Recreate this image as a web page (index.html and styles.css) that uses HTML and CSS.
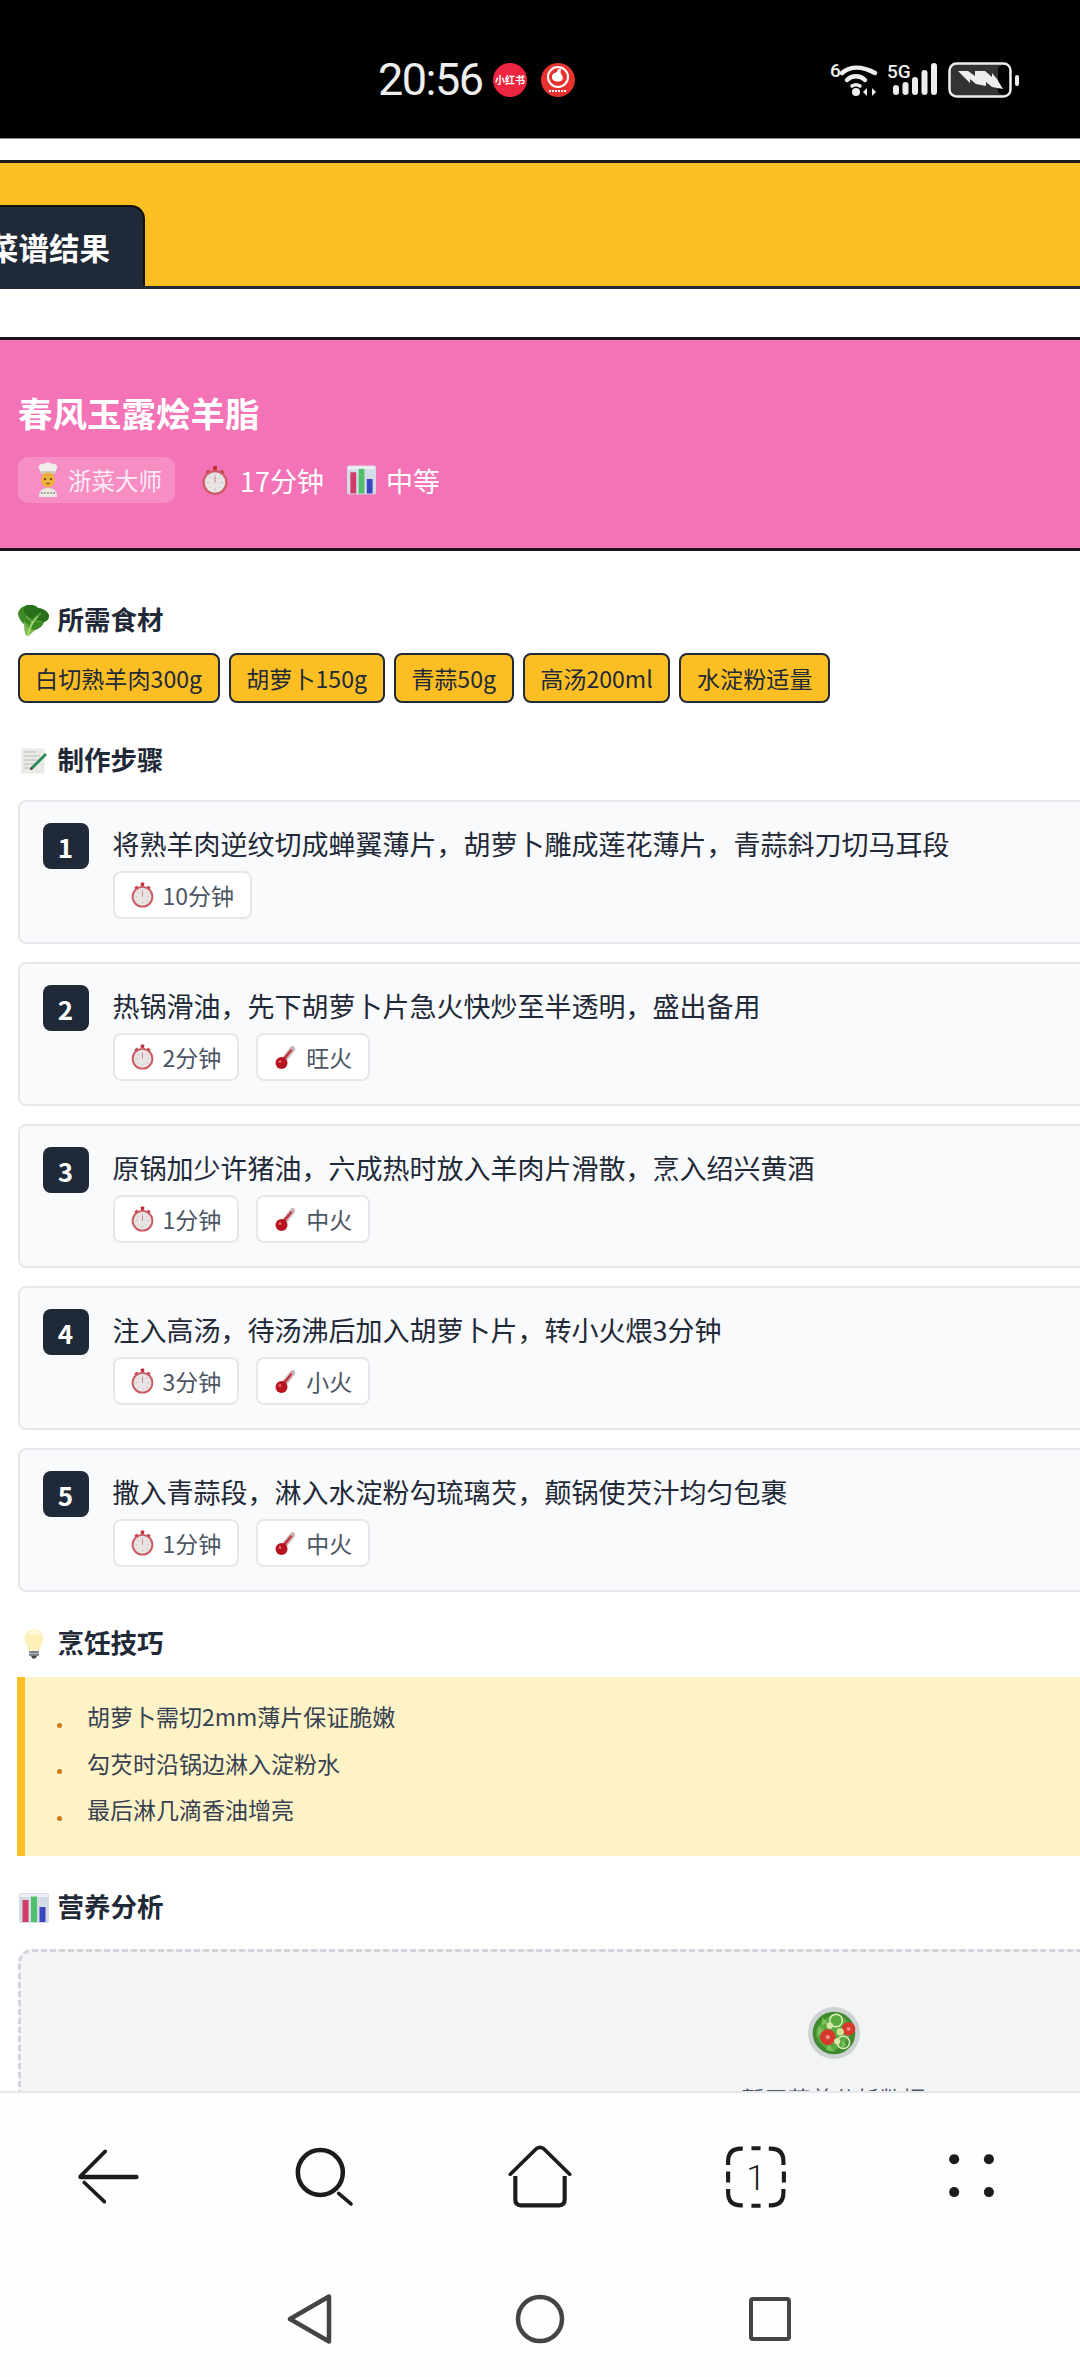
FILE: index.html
```html
<!DOCTYPE html>
<html lang="zh-CN">
<head>
<meta charset="utf-8">
<title>菜谱结果</title>
<link rel="stylesheet" href="styles.css">
</head>
<body>
<svg class="defs" width="0" height="0" aria-hidden="true">
  <defs>
    <symbol id="stopwatch" viewBox="0 0 26 30">
      <rect x="11" y="0.5" width="4" height="4" rx="1" fill="#c0303a"/>
      <path d="M3.500 6.500l3-2.500 1.500 2-3 2.500zM22.500 6.500l-3-2.500-1.500 2 3 2.500z" fill="#c0404a"/>
      <circle cx="13" cy="17" r="12.500" fill="#cb5a63"/>
      <circle cx="13" cy="17" r="10.300" fill="#e7e4e3"/>
      <path d="M13 9v2M13 23v2M5 17h2M19 17h2M7.500 11.500l1.200 1.200M18.500 11.500l-1.200 1.200M7.500 22.500l1.200-1.200M18.500 22.500l-1.200-1.200" stroke="#c3b0b0" stroke-width="1"/>
      <path d="M13 17V11" stroke="#c77a80" stroke-width="1"/>
    </symbol>
    <symbol id="chart" viewBox="0 0 30 30">
      <rect width="30" height="30" rx="2" fill="#d5dbe6"/>
      <rect x="1" y="1" width="28" height="3" fill="#eceff4"/>
      <rect x="3.500" y="7" width="6" height="22" fill="#cf3c68"/>
      <rect x="12" y="3.500" width="6" height="25.500" fill="#4fbf6b"/>
      <rect x="20.500" y="14" width="6" height="15" fill="#3a45c0"/>
    </symbol>
    <symbol id="cook" viewBox="0 0 22 36">
      <path d="M3 8c-3-3 0-7 4-6 2-2 6-2 8 0 4-1 7 3 4 6l-1 4H4z" fill="#f1efe9"/>
      <rect x="4" y="9" width="14" height="3" fill="#cfc9bb"/>
      <ellipse cx="11" cy="18" rx="7" ry="7.500" fill="#eeb03c"/>
      <circle cx="8" cy="17" r="1.100" fill="#5b3a1a"/>
      <circle cx="14" cy="17" r="1.100" fill="#5b3a1a"/>
      <path d="M9 21.500h4" stroke="#b3502f" stroke-width="1.400"/>
      <path d="M2 35c0-6 3-9 9-9s9 3 9 9z" fill="#ece9e2"/>
      <path d="M4 31h14" stroke="#8f8f8f" stroke-width="1.400" stroke-dasharray="2 1"/>
    </symbol>
    <symbol id="leaf" viewBox="0 0 32 32">
      <path d="M7 1c5-2 10-1 13 2 5 0 11 4 11 8 0 3-2 5-5 6-1 4-5 7-9 8-3 2-5 5-8 6-2-2-3-7-2-11C3 17 0 12 0 8c1-3 3-6 7-7z" fill="#3c8a25"/>
      <path d="M7 1c5-2 10-1 13 2 6 1 11 5 11 8 0 3-2 5-5 6-4 1-8-1-11-3C9 12 4 8 7 1z" fill="#28701a"/>
      <path d="M6 16c2 5 6 9 11 9-3 2-5 5-8 6-2-2-3-7-3-15z" fill="#7cbc4c"/>
      <path d="M10 31c1-7 3-14 10-20" stroke="#a9d672" stroke-width="2.200" fill="none"/>
      <path d="M12 22l-6-5M14 17l-6-6M15 15l9 2M17 13l6-5" stroke="#6fae42" stroke-width="1.100" fill="none"/>
    </symbol>
    <symbol id="memo" viewBox="0 0 26 26">
      <rect x="0.500" y="0.500" width="23" height="25" fill="#e9e9e6"/>
      <path d="M3 4h12M3 8h16M3 12h14M3 16h10M3 20h8" stroke="#bcbcb8" stroke-width="1"/>
      <path d="M24 5l2 2L12 21l-3 1 1-3z" fill="#2d8a55"/>
      <path d="M9 22l1-3 2 2z" fill="#33302e"/>
    </symbol>
    <symbol id="thermometer" viewBox="0 0 22 25">
      <path d="M16 1.500c2-1.500 5 1 4 3.500L10 18l-4-4z" fill="#c9b5b5"/>
      <path d="M8 13l8-9 1.400 1.200L10 15z" fill="#c4303a"/>
      <circle cx="6.500" cy="18" r="6" fill="#b8141f"/>
      <circle cx="5" cy="16.500" r="1.500" fill="#e2626a"/>
    </symbol>
    <symbol id="bulb" viewBox="0 0 20 30">
      <path d="M10 0.500c5.500 0 9.500 4 9.500 9 0 5-3.500 7.500-4.500 12.500H5C4 17 0.500 14.500 0.500 9.500c0-5 4-9 9.500-9z" fill="#fdf0b8"/>
      <path d="M10 2c3.500 0 6 2 7 5-3-2-9-3-13 0 1-3 3-5 6-5z" fill="#fffbe6"/>
      <rect x="5" y="22" width="10" height="5" rx="1" fill="#7c8088"/>
      <path d="M5 24.500h10" stroke="#b9bdc2" stroke-width="1"/>
      <path d="M7 27h6l-1.500 2.500h-3z" fill="#3f434a"/>
    </symbol>
    <symbol id="salad" viewBox="0 0 50 50">
      <circle cx="25" cy="25" r="25" fill="#cdd3d2"/>
      <circle cx="25" cy="25" r="20.500" fill="#3f8a2f"/>
      <path d="M8 22c5-8 11-15 20-15 7 2 14 9 14 16-3 9-9 16-18 19C14 40 6 31 8 22z" fill="#5aa93f"/>
      <path d="M10 18l7 6-8 4zM20 36l6 7-9-2zM37 36l-5 5 1-9zM14 10l7 6-8 1z" fill="#78c257"/>
      <circle cx="27" cy="13" r="6" fill="none" stroke="#e3efc1" stroke-width="1.400"/>
      <circle cx="34" cy="34" r="6" fill="none" stroke="#e3efc1" stroke-width="1.400"/>
      <circle cx="19" cy="29" r="7.500" fill="#d8372c"/>
      <circle cx="19" cy="29" r="2" fill="#f0908a"/>
      <circle cx="39" cy="21" r="6.500" fill="#d8372c"/>
      <circle cx="39" cy="21" r="1.800" fill="#f0908a"/>
      <circle cx="21" cy="18" r="3" fill="#dbe7a6"/>
      <circle cx="31" cy="24" r="3.500" fill="#cfe29a"/>
      <circle cx="28" cy="33" r="3" fill="#dbe7a6"/>
    </symbol>
  </defs>
</svg>

<header class="statusbar">
  <div class="status-left">
    <span class="clock">20:56</span>
    <span class="app-badge"><span class="app-badge-text">小红书</span></span>
    <span class="app-badge app-badge-two">
      <svg class="app-glyph" viewBox="0 0 34 34"><circle cx="17" cy="14" r="10" fill="none" stroke="#fff" stroke-width="2"/><path d="M11 14c0-4 3-4 5-5 0-2 2-4 4-3 0 2-1 3 0 5 2 2 3 5 0 7-3 1-9 1-9-4z" fill="#fff"/><path d="M8 28h18" stroke="#fff" stroke-width="2" stroke-dasharray="2 1"/></svg>
    </span>
  </div>
  <div class="status-right">
    <svg class="wifi" viewBox="0 0 48 36">
      <text x="0" y="15" class="wifi-six">6</text>
      <path d="M12 11c8-7 20-7 33 0" fill="none" stroke="#eee" stroke-width="4.500" stroke-linecap="round"/>
      <path d="M17 18c5-5 13-5 18 0" fill="none" stroke="#eee" stroke-width="4.500" stroke-linecap="round"/>
      <path d="M22 24c3-2 5-2 8 0" fill="none" stroke="#eee" stroke-width="3.500" stroke-linecap="round"/>
      <circle cx="26" cy="30" r="4" fill="#eee"/>
      <path d="M37 26l-4 4 4 4zM42 26l4 4-4 4z" fill="#eee"/>
    </svg>
    <svg class="signal" viewBox="0 0 50 36">
      <text x="0" y="16" class="signal-text">5G</text>
      <rect x="6" y="23" width="6" height="10" rx="3" fill="#eee"/>
      <rect x="15.500" y="20" width="6" height="13" rx="3" fill="#eee"/>
      <rect x="25" y="15" width="6" height="18" rx="3" fill="#eee"/>
      <rect x="34.500" y="8" width="6" height="25" rx="3" fill="#eee"/>
      <rect x="44" y="1" width="6" height="32" rx="3" fill="#eee"/>
    </svg>
    <svg class="battery" viewBox="0 0 72 36">
      <rect x="1.500" y="1.500" width="61" height="33" rx="7" fill="#333" stroke="#eee" stroke-width="2.500"/>
      <rect x="50" y="3" width="11" height="30" rx="5" fill="#000"/>
      <path d="M10 9l10 0 7 5 0-5 10 0 7 6 0-4 5 6 6 10-11-2-6-5 0 4-10-2-6-5 0 4z" fill="#eee"/>
      <rect x="67" y="13" width="4" height="11" rx="2" fill="#eee"/>
    </svg>
  </div>
</header>

<main class="page">
  <div class="tabbar">
    <div class="tab">菜谱结果</div>
  </div>

  <section class="hero">
    <h1 class="hero-title">春风玉露烩羊脂</h1>
    <div class="hero-meta">
      <span class="cuisine"><svg class="ico-cook"><use href="#cook"/></svg>浙菜大师</span>
      <span class="meta-item"><svg class="ico-watch-lg"><use href="#stopwatch"/></svg>17分钟</span>
      <span class="meta-item meta-level"><svg class="ico-chart-lg"><use href="#chart"/></svg>中等</span>
    </div>
  </section>

  <div class="content">
    <h2 class="heading heading-ingredients"><span class="heading-ico"><svg class="ico-leaf"><use href="#leaf"/></svg></span>所需食材</h2>
    <ul class="tags">
      <li class="tag">白切熟羊肉300g</li>
      <li class="tag">胡萝卜150g</li>
      <li class="tag">青蒜50g</li>
      <li class="tag">高汤200ml</li>
      <li class="tag">水淀粉适量</li>
    </ul>

    <h2 class="heading heading-steps"><span class="heading-ico"><svg class="ico-memo"><use href="#memo"/></svg></span>制作步骤</h2>
    <ol class="steps">
      <li class="step">
        <span class="step-no">1</span>
        <div class="step-body">
          <p class="step-text">将熟羊肉逆纹切成蝉翼薄片，胡萝卜雕成莲花薄片，青蒜斜刀切马耳段</p>
          <div class="step-chips">
            <span class="chip"><svg class="ico-watch"><use href="#stopwatch"/></svg>10分钟</span>
          </div>
        </div>
      </li>
      <li class="step">
        <span class="step-no">2</span>
        <div class="step-body">
          <p class="step-text">热锅滑油，先下胡萝卜片急火快炒至半透明，盛出备用</p>
          <div class="step-chips">
            <span class="chip"><svg class="ico-watch"><use href="#stopwatch"/></svg>2分钟</span>
            <span class="chip"><svg class="ico-temp"><use href="#thermometer"/></svg>旺火</span>
          </div>
        </div>
      </li>
      <li class="step">
        <span class="step-no">3</span>
        <div class="step-body">
          <p class="step-text">原锅加少许猪油，六成热时放入羊肉片滑散，烹入绍兴黄酒</p>
          <div class="step-chips">
            <span class="chip"><svg class="ico-watch"><use href="#stopwatch"/></svg>1分钟</span>
            <span class="chip"><svg class="ico-temp"><use href="#thermometer"/></svg>中火</span>
          </div>
        </div>
      </li>
      <li class="step">
        <span class="step-no">4</span>
        <div class="step-body">
          <p class="step-text">注入高汤，待汤沸后加入胡萝卜片，转小火煨3分钟</p>
          <div class="step-chips">
            <span class="chip"><svg class="ico-watch"><use href="#stopwatch"/></svg>3分钟</span>
            <span class="chip"><svg class="ico-temp"><use href="#thermometer"/></svg>小火</span>
          </div>
        </div>
      </li>
      <li class="step">
        <span class="step-no">5</span>
        <div class="step-body">
          <p class="step-text">撒入青蒜段，淋入水淀粉勾琉璃芡，颠锅使芡汁均匀包裹</p>
          <div class="step-chips">
            <span class="chip"><svg class="ico-watch"><use href="#stopwatch"/></svg>1分钟</span>
            <span class="chip"><svg class="ico-temp"><use href="#thermometer"/></svg>中火</span>
          </div>
        </div>
      </li>
    </ol>

    <h2 class="heading heading-tips"><span class="heading-ico"><svg class="ico-bulb"><use href="#bulb"/></svg></span>烹饪技巧</h2>
    <ul class="tips">
      <li class="tip">胡萝卜需切2mm薄片保证脆嫩</li>
      <li class="tip">勾芡时沿锅边淋入淀粉水</li>
      <li class="tip">最后淋几滴香油增亮</li>
    </ul>

    <h2 class="heading heading-nutrition"><span class="heading-ico"><svg class="ico-chart"><use href="#chart"/></svg></span>营养分析</h2>
    <div class="empty">
      <svg class="ico-salad"><use href="#salad"/></svg>
      <p class="empty-text">暂无营养分析数据</p>
    </div>
  </div>
</main>

<nav class="browser-nav">
  <svg class="nav-ico" viewBox="0 0 70 70"><path d="M5 35H66" fill="none" stroke="#1c1c1c" stroke-width="5" stroke-linecap="round"/><path d="M32 7L5 34M9 41L31 62" fill="none" stroke="#1c1c1c" stroke-width="4" stroke-linecap="round"/></svg>
  <svg class="nav-ico" viewBox="0 0 70 70"><circle cx="31" cy="30" r="24.600" fill="none" stroke="#1c1c1c" stroke-width="5"/><path d="M51 53L64.500 64.500" fill="none" stroke="#1c1c1c" stroke-width="4" stroke-linecap="round"/></svg>
  <svg class="nav-ico" viewBox="0 0 70 70"><path d="M2.500 32L31 4q4-3 8 0L67.500 32" fill="none" stroke="#1c1c1c" stroke-width="4" stroke-linecap="round"/><path d="M8 34V60q0 6 6 6H56q6 0 6-6V34" fill="none" stroke="#1c1c1c" stroke-width="4.500"/></svg>
  <svg class="nav-ico" viewBox="0 0 70 70"><path d="M4.500 22V18q0-14 14-14h2M30 3.500h10M49 4h2q14 0 14 14v4M4.500 29v12M65.500 29v12M4.500 48v4q0 14 14 14h2M30 66.500h10M49 66h2q14 0 14-14v-4" fill="none" stroke="#1c1c1c" stroke-width="4.500"/><text x="35" y="49" class="tab-count">1</text></svg>
  <svg class="nav-ico" viewBox="0 0 70 70"><circle cx="15.500" cy="15.500" r="5.500" fill="#1c1c1c"/><circle cx="53.500" cy="15.500" r="5.500" fill="#1c1c1c"/><circle cx="15.500" cy="51.500" r="5.500" fill="#1c1c1c"/><circle cx="53.500" cy="51.500" r="5.500" fill="#1c1c1c"/></svg>
</nav>
<nav class="system-nav">
  <svg class="sys-ico" viewBox="0 0 50 50"><path d="M44 2.500V47.500L5 25z" fill="none" stroke="#444" stroke-width="4.500" stroke-linejoin="round"/></svg>
  <svg class="sys-ico" viewBox="0 0 50 50"><circle cx="25" cy="25" r="22" fill="none" stroke="#444" stroke-width="4.500"/></svg>
  <svg class="sys-ico" viewBox="0 0 50 50"><rect x="6" y="5" width="38" height="40" rx="2" fill="none" stroke="#444" stroke-width="4"/></svg>
</nav>
</body>
</html>
```

FILE: styles.css
```css
* { box-sizing: border-box; }

html, body {
  margin: 0;
  height: 100%;
}

body {
  width: 1080px;
  height: 2377px;
  display: flex;
  flex-direction: column;
  overflow: hidden;
  background: #fff;
  color: #1f2937;
  font-family: "Noto Sans CJK SC", "Noto Sans", sans-serif;
}

.defs { display: block; width: 0; height: 0; flex: none; }

h1, h2, p, ul, ol { margin: 0; padding: 0; }
ul, ol { list-style: none; }
svg { display: block; flex: none; }

/* Status bar */
.statusbar {
  flex: none;
  height: 139px;
  background: #000;
  border-bottom: 1px solid #8d8d8d;
  display: flex;
  align-items: center;
  justify-content: space-between;
  padding: 22px 60px 0 378px;
  color: #eee;
}
.status-left { display: flex; align-items: center; }
.clock {
  font-family: Roboto, sans-serif;
  font-weight: 400;
  font-size: 45px;
  letter-spacing: -1.500px;
  line-height: 50px;
  width: 102px;
  margin-right: 13px;
  white-space: nowrap;
}
.app-badge {
  width: 34px;
  height: 34px;
  border-radius: 50%;
  background: #ee2540;
  margin-right: 14px;
  display: flex;
  align-items: center;
  justify-content: center;
  overflow: hidden;
}
.app-badge-text {
  color: #fff;
  font-size: 10px;
  font-weight: 700;
  line-height: 12px;
  white-space: nowrap;
}
.app-badge-two { background: #e8322f; margin-right: 0; }
.app-glyph { width: 34px; height: 34px; }
.status-right { display: flex; align-items: center; gap: 9px; }
.wifi { width: 48px; height: 36px; overflow: visible; }
.wifi-six, .signal-text {
  font-family: "Roboto", sans-serif;
  font-weight: 500;
  fill: #eee;
}
.wifi-six { font-size: 19px; }
.signal-text { font-size: 19px; }
.signal { width: 50px; height: 36px; overflow: visible; }
.battery { width: 72px; height: 36px; margin-left: 2px; }

/* Scrolling page */
.page {
  flex: 1;
  min-height: 0;
  overflow: hidden;
  padding-top: 21px;
  background: #fff;
}

.tabbar {
  height: 129px;
  background: #fbbf24;
  border-top: 3px solid #1a1a1a;
  border-bottom: 3px solid #1f2937;
  display: flex;
  align-items: flex-end;
}
.tab {
  height: 81px;
  width: 197px;
  margin-left: -52px;
  padding: 20px 0 0 38px;
  background: #1f2937;
  border: 2px solid #111;
  border-bottom: 0;
  border-radius: 14px 14px 0 0;
  color: #fff;
  font-size: 30.500px;
  font-weight: 700;
  line-height: 40px;
  white-space: nowrap;
}

.hero {
  margin-top: 48px;
  height: 214px;
  padding: 50px 18px 0;
  background: #f472b6;
  border-top: 3px solid #1a1020;
  border-bottom: 3px solid #1a1020;
  color: #fff;
}
.hero-title {
  font-size: 34.500px;
  font-weight: 700;
  line-height: 44px;
}
.hero-meta {
  margin-top: 23px;
  display: flex;
  align-items: center;
  font-size: 27px;
}
.cuisine {
  display: flex;
  align-items: center;
  height: 46px;
  width: 157px;
  padding-left: 19px;
  gap: 9px;
  border-radius: 10px;
  background: rgba(255, 255, 255, 0.2);
  font-size: 23.500px;
  color: #fdeaf4;
}
.meta-item {
  display: flex;
  align-items: center;
  margin-left: 27px;
  gap: 12px;
}
.meta-level { gap: 10px; margin-left: 23px; }
.ico-cook { width: 22px; height: 36px; }
.ico-watch-lg { width: 26px; height: 31px; }
.ico-chart-lg { width: 29px; height: 30px; }

/* Content column, wider than the viewport as in the source */
.content { width: 1632px; margin-left: 17.500px; }

.heading {
  display: flex;
  align-items: center;
  height: 40px;
  padding-bottom: 4px;
  font-size: 26.500px;
  font-weight: 700;
  color: #1f2937;
}
.heading-ico {
  width: 40px;
  display: flex;
  padding: 5px 8px 0 0;
  justify-content: center;
}
.heading-ingredients { margin-top: 49px; }
.heading-steps { margin-top: 37px; }
.heading-tips { margin-top: 31px; }
.heading-nutrition { margin-top: 31px; }
.ico-leaf { width: 32px; height: 32px; }
.ico-memo { width: 26px; height: 26px; }
.ico-bulb { width: 20px; height: 30px; }
.ico-chart { width: 30px; height: 30px; }

.tags {
  margin-top: 13px;
  display: flex;
  gap: 9px;
}
.tag {
  height: 50px;
  padding: 0 15.600px;
  display: flex;
  align-items: center;
  background: #fbbf24;
  border: 2px solid #1f2937;
  border-radius: 8px;
  font-size: 23.100px;
  color: #1f2937;
  white-space: nowrap;
}

.steps {
  margin-top: 20px;
  display: flex;
  flex-direction: column;
  gap: 18px;
}
.step {
  height: 144px;
  display: flex;
  gap: 24px;
  padding: 21px 23px;
  background: #f9fafb;
  border: 2px solid #e5e7eb;
  border-radius: 8px;
}
.step-no {
  flex: none;
  width: 46px;
  height: 46px;
  display: flex;
  align-items: center;
  justify-content: center;
  background: #1f2937;
  border-radius: 8px;
  color: #fff;
  font-size: 26px;
  font-weight: 700;
}
.step-text {
  font-size: 27px;
  line-height: 42px;
  color: #1f2937;
  white-space: nowrap;
}
.step-chips {
  margin-top: 6px;
  display: flex;
  gap: 17px;
}
.chip {
  height: 48px;
  display: flex;
  align-items: center;
  padding: 0 16px;
  gap: 9px;
  background: #fff;
  border: 2px solid #e5e7eb;
  border-radius: 8px;
  font-size: 23px;
  color: #4b5563;
  white-space: nowrap;
}
.ico-watch { width: 23px; height: 26px; }
.ico-temp { width: 22px; height: 25px; margin-left: 1px; }

.tips {
  margin-top: 14px;
  height: 179px;
  margin-left: -0.500px;
  padding: 16px 0 0 32px;
  background: #fef3c7;
  border-left: 8px solid #fbbf24;
}
.tip {
  display: flex;
  align-items: center;
  gap: 25px;
  height: 46.500px;
  font-size: 23px;
  color: #374151;
}
.tip::before {
  content: "";
  flex: none;
  width: 5px;
  height: 5px;
  margin-top: 18px;
  border-radius: 50%;
  background: #c9791a;
}

.empty {
  margin-top: 22px;
  height: 400px;
  padding-top: 55px;
  display: flex;
  flex-direction: column;
  align-items: center;
  background: #f3f4f6;
  border: 3px dashed #d1d5db;
  border-radius: 14px;
}
.ico-salad { width: 52px; height: 52px; }
.empty-text {
  margin-top: 22px;
  font-size: 23px;
  line-height: 34px;
  color: #4b5563;
}

/* Bottom bars */
.browser-nav {
  flex: none;
  height: 170px;
  background: #fefefe;
  border-top: 2px solid #e5e7eb;
  display: grid;
  grid-template-columns: repeat(5, 216px);
  justify-items: center;
  align-items: center;
}
.nav-ico { width: 64px; height: 64px; }
.tab-count {
  font-family: "Roboto", sans-serif;
  font-size: 38px;
  font-weight: 300;
  text-anchor: middle;
  fill: #1c1c1c;
}
.system-nav {
  flex: none;
  height: 116px;
  background: #fefefe;
  display: flex;
  justify-content: center;
  align-items: center;
  gap: 180px;
}
.sys-ico { width: 50px; height: 50px; }
```
